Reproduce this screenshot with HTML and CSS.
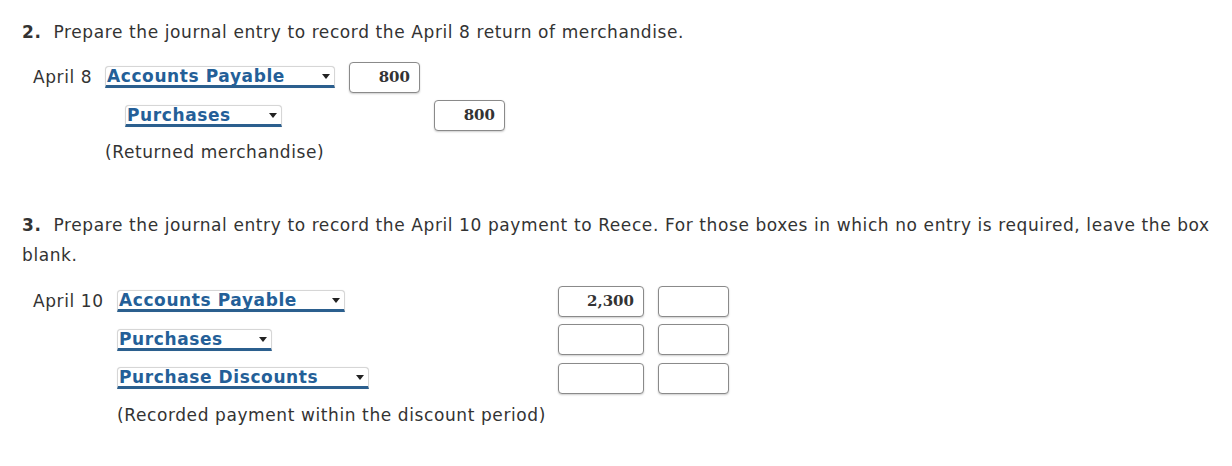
FILE: index.html
```html
<!DOCTYPE html>
<html>
<head>
<meta charset="utf-8">
<link rel="stylesheet" href="styles.css">
</head>
<body>
<div class="page">
  <section class="part part-2">
    <p class="question"><b class="num">2.</b>Prepare the journal entry to record the April 8 return of merchandise.</p>
    <div class="journal j2">
      <div class="row">
        <div class="date">April 8</div>
        <div class="account"><div class="select w230"><span>Accounts Payable</span><i class="caret"></i></div></div>
        <div class="debit"><div class="amount w71">800</div></div>
        <div class="credit"></div>
      </div>
      <div class="row">
        <div class="date"></div>
        <div class="account indent"><div class="select w157"><span>Purchases</span><i class="caret"></i></div></div>
        <div class="debit"></div>
        <div class="credit"><div class="amount w71">800</div></div>
      </div>
      <div class="note">(Returned merchandise)</div>
    </div>
  </section>

  <section class="part part-3">
    <p class="question"><b class="num">3.</b>Prepare the journal entry to record the April 10 payment to Reece. For those boxes in which no entry is required, leave the box blank.</p>
    <div class="journal j3">
      <div class="row">
        <div class="date">April 10</div>
        <div class="account"><div class="select w228"><span>Accounts Payable</span><i class="caret"></i></div></div>
        <div class="debit"><div class="amount w86">2,300</div></div>
        <div class="credit"><div class="amount w71"></div></div>
      </div>
      <div class="row">
        <div class="date"></div>
        <div class="account"><div class="select w155"><span>Purchases</span><i class="caret"></i></div></div>
        <div class="debit"><div class="amount w86"></div></div>
        <div class="credit"><div class="amount w71"></div></div>
      </div>
      <div class="row">
        <div class="date"></div>
        <div class="account"><div class="select w252"><span>Purchase Discounts</span><i class="caret"></i></div></div>
        <div class="debit"><div class="amount w86"></div></div>
        <div class="credit"><div class="amount w71"></div></div>
      </div>
      <div class="note">(Recorded payment within the discount period)</div>
    </div>
  </section>
</div>
</body>
</html>
```

FILE: styles.css
```css
html, body {
  margin: 0;
  padding: 0;
  background: #ffffff;
}

body {
  font-family: "DejaVu Sans", Verdana, sans-serif;
  font-size: 17px;
  letter-spacing: 0.6px;
  color: #333333;
}

.page {
  padding: 17px 0 0 22px;
}

.question {
  margin: 0;
  line-height: 30px;
  padding-right: 4px;
}

.num {
  font-weight: bold;
  margin-right: 12px;
}

.journal {
  display: flex;
  flex-direction: column;
}

.j2 {
  margin-top: 11px;
}

.j3 {
  margin-top: 12px;
}

.part-3 {
  margin-top: 41px;
}

.row {
  display: grid;
  height: 38.5px;
  align-items: center;
}

.j2 .row {
  grid-template-columns: 72px 244px 85px 90px;
  padding-left: 11px;
}

.j3 .row {
  grid-template-columns: 84px 441px 100px 90px;
  padding-left: 11px;
}

.date {
  white-space: nowrap;
}

.account.indent {
  padding-left: 20px;
}

.select {
  position: relative;
  box-sizing: border-box;
  height: 22px;
  background: #ffffff;
  border: 1px solid #d6d6d6;
  border-bottom: 3px solid #2b5f8e;
  border-radius: 4px 4px 0 0;
  box-shadow: 0 0 1px rgba(0,0,0,0.15);
  color: #245f98;
  font-weight: bold;
  line-height: 19px;
  padding-left: 1px;
  white-space: nowrap;
}

.caret {
  position: absolute;
  right: 4px;
  top: 7px;
  width: 0;
  height: 0;
  border-left: 4px solid transparent;
  border-right: 4px solid transparent;
  border-top: 5px solid #222222;
}

.w230 { width: 230px; }
.w157 { width: 157px; }
.w228 { width: 228px; }
.w155 { width: 155px; }
.w252 { width: 252px; }

.amount {
  box-sizing: border-box;
  height: 31px;
  border: 1px solid #8a8a8a;
  border-radius: 4px;
  box-shadow: 0 1px 2px rgba(0,0,0,0.2);
  background: #ffffff;
  font-family: "DejaVu Serif", Georgia, serif;
  font-weight: bold;
  font-size: 15px;
  letter-spacing: 0;
  color: #333333;
  text-align: right;
  line-height: 29px;
  padding-right: 9px;
}

.w71 { width: 71px; }
.w86 { width: 86px; }

.note {
  height: 34px;
  line-height: 34px;
}

.j2 .note {
  padding-left: 83px;
}

.j3 .note {
  padding-left: 95px;
}
```
